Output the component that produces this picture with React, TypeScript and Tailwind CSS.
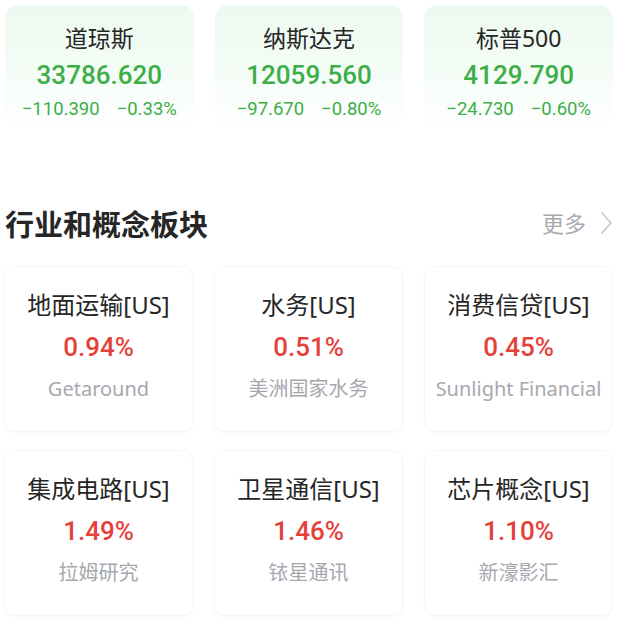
const INDEXES = [
  { name: "道琼斯", value: "33786.620", change: "−110.390", pct: "−0.33%" },
  { name: "纳斯达克", value: "12059.560", change: "−97.670", pct: "−0.80%" },
  { name: "标普500", value: "4129.790", change: "−24.730", pct: "−0.60%" },
];

const SECTORS = [
  { name: "地面运输[US]", pct: "0.94%", lead: "Getaround" },
  { name: "水务[US]", pct: "0.51%", lead: "美洲国家水务" },
  { name: "消费信贷[US]", pct: "0.45%", lead: "Sunlight Financial" },
  { name: "集成电路[US]", pct: "1.49%", lead: "拉姆研究" },
  { name: "卫星通信[US]", pct: "1.46%", lead: "铱星通讯" },
  { name: "芯片概念[US]", pct: "1.10%", lead: "新濠影汇" },
];

// Latin text in Noto Sans, digits in Roboto
const TEXT = "font-['Noto_Sans','Noto_Sans_CJK_SC',sans-serif]";
const NUM = "font-['Roboto','Noto_Sans_CJK_SC',sans-serif]";

export default function App() {
  return (
    <div className={`w-[622px] h-[622px] bg-white overflow-hidden ${TEXT}`}>
      {/* Index cards */}
      <div className="grid grid-cols-3 gap-[21px] pt-[5px] pl-[5px] pr-[9px]">
        {INDEXES.map((idx) => (
          <div
            key={idx.name}
            className="rounded-[14px] bg-gradient-to-b from-[#ecf9f0] via-[#f4fcf6] to-white pt-[18px] pb-[10px] text-center"
          >
            <p className="text-[23px] leading-[30px] text-[#262626]">{idx.name}</p>
            <p className={`mt-[5px] text-[26px] leading-[34px] font-medium text-[#3dae48] ${NUM}`}>{idx.value}</p>
            <div className={`mt-[5px] flex justify-center gap-[17px] text-[18.5px] leading-[24px] text-[#3dae48] ${NUM}`}>
              <span>{idx.change}</span>
              <span>{idx.pct}</span>
            </div>
          </div>
        ))}
      </div>

      {/* Section header */}
      <div className="mt-[74px] flex items-center justify-between pl-[5px] pr-[9px]">
        <h2 className="text-[29px] leading-[36px] font-semibold text-[#262626] font-['Noto_Sans_CJK_SC',sans-serif]">
          行业和概念板块
        </h2>
        <div className="flex items-center gap-[14px] text-[22px] leading-[30px] text-[#a9a9b0]">
          <span>更多</span>
          <svg width="13" height="24" viewBox="0 0 13 24" fill="none">
            <polyline points="2,2 11,12 2,22" stroke="#c4c4ca" strokeWidth="1.6" strokeLinecap="round" strokeLinejoin="round" />
          </svg>
        </div>
      </div>

      {/* Sector cards */}
      <div className="mt-[25px] grid grid-cols-3 gap-x-[21px] gap-y-[18px] pl-[4px] pr-[9px]">
        {SECTORS.map((s) => (
          <div
            key={s.name}
            className="h-[166px] rounded-[10px] border border-[#fbf5f9] bg-white shadow-[0_1px_2px_rgba(240,225,236,0.3)] pt-[23px] text-center"
          >
            <p className="text-[24px] leading-[30px] text-[#262626]">{s.name}</p>
            <p className={`mt-[10px] text-[26px] leading-[34px] font-medium text-[#e5413a] ${NUM}`}>{s.pct}</p>
            <p className="mt-[12px] text-[20px] leading-[26px] text-[#a7a8af] whitespace-nowrap">{s.lead}</p>
          </div>
        ))}
      </div>
    </div>
  );
}
